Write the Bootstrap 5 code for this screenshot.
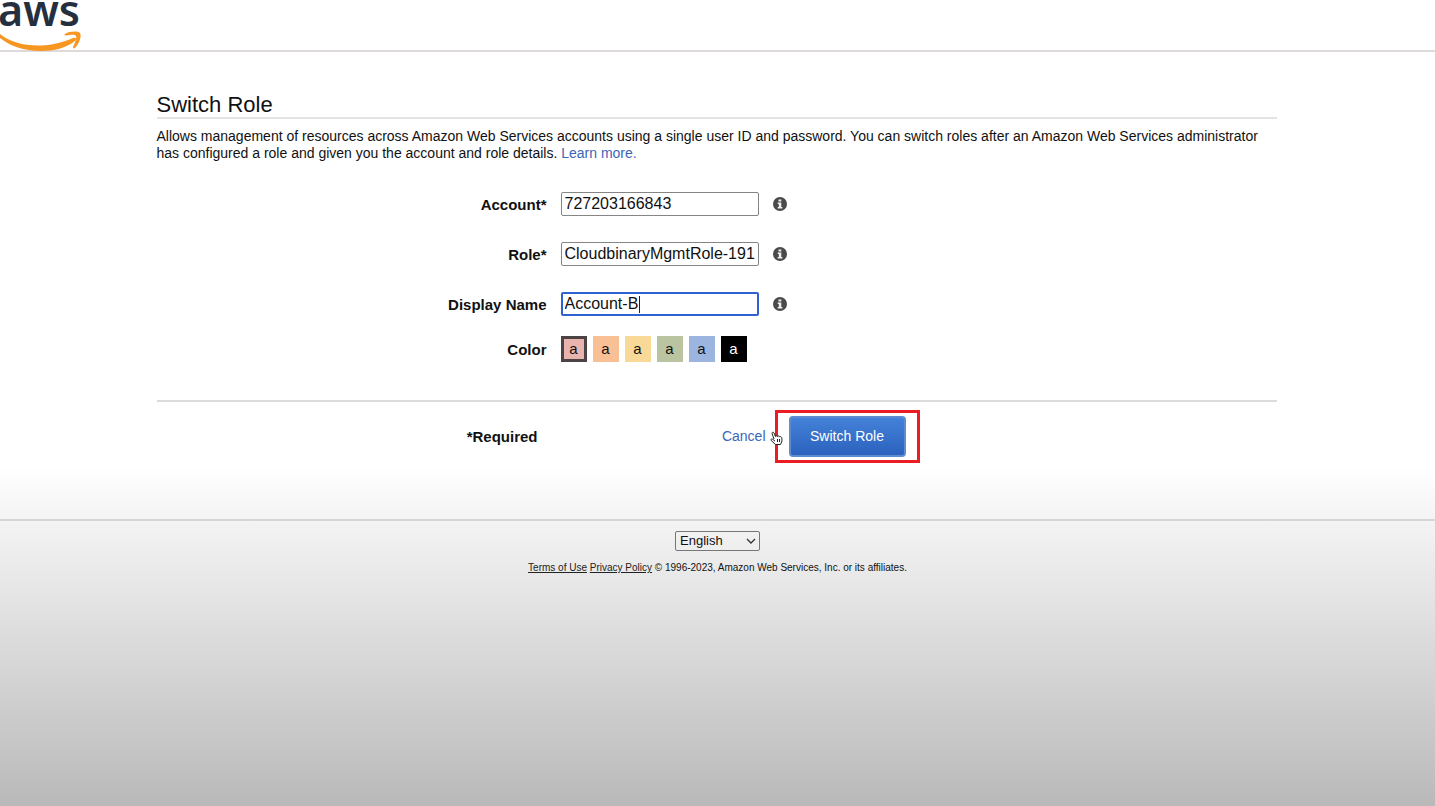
<!DOCTYPE html>
<html lang="en">
<head>
<meta charset="utf-8">
<meta name="viewport" content="width=device-width, initial-scale=1">
<title>Switch Role</title>
<link href="https://cdn.jsdelivr.net/npm/bootstrap@5.3.0/dist/css/bootstrap.min.css" rel="stylesheet">
<style>
  body { min-height: 100vh; font-family: "Liberation Sans", Arial, sans-serif; font-size: 14px; line-height: 17px; color: #111; background: linear-gradient(#fff 0, #fff 58%, #f3f3f3 65%, #e6e6e6 73%, #b9b9b9 100%) no-repeat; }
  a { color: #3b66b8; text-decoration: none; }
  .site-header { height: 52px; border-bottom: 2px solid #dedada; }
  .page-width { max-width: 1122px; padding: 40px 2px 0 0; }
  h1 { font-size: 22px; line-height: 25px; font-weight: 400; border-bottom: 2px solid #e4e4e4; }
  .intro { margin: 9px 0 30px; }
  .field-label { width: 390px; font-size: 15px; font-weight: 700; text-align: right; }
  .field-row { gap: 14px; height: 24px; margin-bottom: 26px; }
  .color-row { margin-top: -6px; gap: 14px; }
  .text-field { width: 198px; height: 24px; padding: 0 3px; font-size: 16px; line-height: 20px; color: #111; border: 1px solid #858585; border-radius: 2px; background: #fff; outline: 0; }
  .text-field.active { border: 2px solid #2f62d0; padding: 0 2px; }
  .caret { left: 78px; top: 4px; width: 1px; height: 17px; background: #222; }
  .swatches { gap: 6px; }
  .swatch { width: 26px; height: 26px; padding: 0; border: 0; font-size: 15px; line-height: 26px; color: #111; }
  .swatch.chosen { border: 3px solid #4b4344; line-height: 20px; }
  .red { background: #e9b4ae; } .orange { background: #f9c096; } .yellow { background: #f9d997; }
  .green { background: #bac4a0; } .blue { background: #9bb5e0; } .black { background: #000; color: #fff; }
  .actions { border-top: 2px solid #dcdcdc; padding-top: 8px; margin-top: 38px; }
  .required { width: 381px; font-size: 15px; font-weight: 700; text-align: right; }
  .cancel-slot { width: 228px; text-align: right; }
  .highlight { width: 145px; height: 53px; margin-left: 9px; border: 3px solid #ec1c24; }
  .btn-switch { width: 117px; height: 41px; padding: 0; font-size: 14px; color: #fff; border: 2px solid #5f8bd0; border-radius: 4px; background: linear-gradient(#4481d8, #2b62bd); }
  .hand { left: -8px; top: 18px; }
  .site-footer { margin-top: 56px; padding-top: 10px; border-top: 2px solid #d6d6d6; font-size: 10px; line-height: 12px; }
  .site-footer a { color: #222; text-decoration: underline; }
  .language { width: 85px; height: 20px; padding: 0 4px; font-size: 13px; line-height: 18px; color: #111; border: 1px solid #777; border-radius: 2px; appearance: none; background: transparent; }
  .chevron { right: 4px; top: 7px; pointer-events: none; }
  .legal { margin: 11px 0 0; }
</style>
</head>
<body>
<svg class="d-none">
  <symbol id="info" viewBox="0 0 14 14">
    <circle cx="7" cy="7" r="7" fill="#4a4a4a"/>
    <path d="M5.5 2.4H8.3V4.5H5.5ZM4.7 5.5H8.3V10H9.4V11.4H4.7V10H5.8V6.9H4.7Z" fill="#eee"/>
  </symbol>
</svg>
<header class="site-header">
  <a href="#" class="d-inline-block" aria-label="aws home">
    <svg class="d-block" width="84" height="52" viewBox="0 0 84 52">
      <text x="-2" y="26" font-family="Noto Sans, Open Sans, sans-serif" font-size="43" font-weight="600" fill="#252f3e">aws</text>
      <path d="M0 34C10 42 24 46 41 45.500C53 45 64 42 73 38C76 37 77 39 75 41C66 48 54 51 41 51C24 51 10 46 0 38Z" fill="#f79722"/>
      <path d="M65 34C70 31 78 31 80 33C82 36 79 44 75 48C74 49 73 48 73 47C75 43 77 38 76 36C75 34 70 35 66 35.500C64 35.500 64 34.500 65 34Z" fill="#f79722"/>
    </svg>
  </a>
</header>
<main class="page-width mx-auto">
  <h1 class="mb-0">Switch Role</h1>
  <p class="intro">Allows management of resources across Amazon Web Services accounts using a single user ID and password. You can switch roles after an Amazon Web Services administrator has configured a role and given you the account and role details. <a href="#">Learn more.</a></p>
  <form>
    <div class="field-row d-flex align-items-center">
      <label class="field-label" for="account">Account*</label>
      <input class="text-field" id="account" type="text" value="727203166843">
      <svg width="14" height="14" aria-hidden="true"><use href="#info"/></svg>
    </div>
    <div class="field-row d-flex align-items-center">
      <label class="field-label" for="role">Role*</label>
      <input class="text-field" id="role" type="text" value="CloudbinaryMgmtRole-191">
      <svg width="14" height="14" aria-hidden="true"><use href="#info"/></svg>
    </div>
    <div class="field-row d-flex align-items-center">
      <label class="field-label" for="display">Display Name</label>
      <div class="position-relative d-flex">
        <input class="text-field active" id="display" type="text" value="Account-B">
        <span class="caret position-absolute"></span>
      </div>
      <svg width="14" height="14" aria-hidden="true"><use href="#info"/></svg>
    </div>
    <div class="color-row d-flex align-items-center" role="group" aria-labelledby="color-label">
      <span class="field-label" id="color-label">Color</span>
      <div class="swatches d-flex">
        <button type="button" class="swatch red chosen">a</button>
        <button type="button" class="swatch orange">a</button>
        <button type="button" class="swatch yellow">a</button>
        <button type="button" class="swatch green">a</button>
        <button type="button" class="swatch blue">a</button>
        <button type="button" class="swatch black">a</button>
      </div>
    </div>
    <div class="actions d-flex align-items-center">
      <span class="required">*Required</span>
      <span class="cancel-slot"><a href="#">Cancel</a></span>
      <div class="highlight position-relative d-flex align-items-center justify-content-center">
        <button type="submit" class="btn-switch">Switch Role</button>
        <svg class="hand position-absolute" width="13" height="15" viewBox="0 0 13 15" aria-hidden="true">
          <path d="M4 8L2 2.500C1.800 1 3.500 .7 4 2L5.500 5.500C6 4.600 7 4.500 7.500 5.500C8 4.700 9.300 4.800 9.600 5.800C10.700 5.200 11.700 6 11.800 7.200L12 10L10.500 13.500H5.500L1.200 9.500C.5 8.500 1.500 7.500 2.500 8.200L5 10M7.500 8V11M9.500 8V11" fill="#fff" stroke="#222" stroke-width="1"/>
        </svg>
      </div>
    </div>
  </form>
</main>
<footer class="site-footer text-center">
  <div class="position-relative d-inline-flex">
    <select class="language" aria-label="Language"><option>English</option></select>
    <svg class="chevron position-absolute" width="10" height="7" viewBox="0 0 10 7" aria-hidden="true"><path d="M1 1L5 5L9 1" fill="none" stroke="#333" stroke-width="1.300"/></svg>
  </div>
  <p class="legal"><a href="#">Terms of Use</a> <a href="#">Privacy Policy</a> © 1996-2023, Amazon Web Services, Inc. or its affiliates.</p>
</footer>
</body>
</html>
